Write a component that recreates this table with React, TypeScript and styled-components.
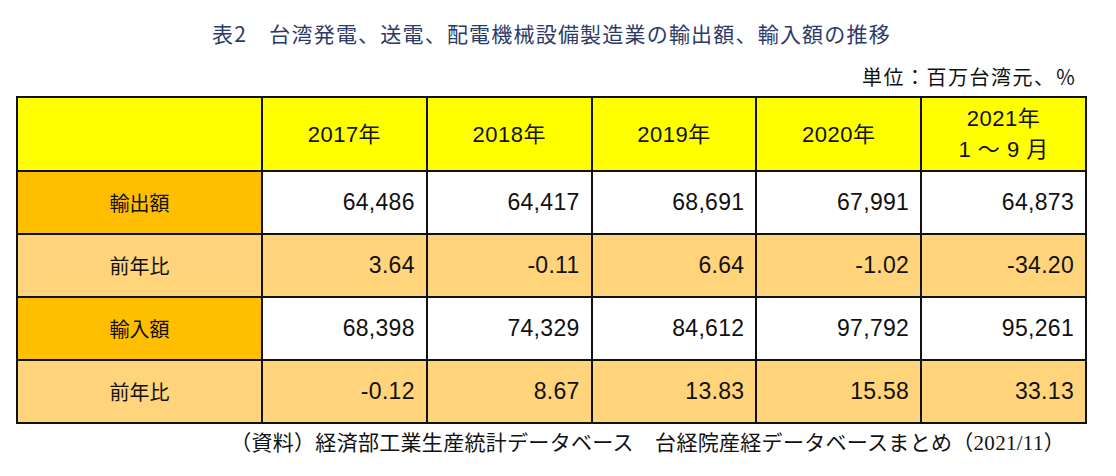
import React from 'react';
import styled, { createGlobalStyle } from 'styled-components';

const GlobalStyle = createGlobalStyle`
  html, body {
    margin: 0;
    padding: 0;
    background: #ffffff;
  }
`;

const Page = styled.div`
  width: 1116px;
  height: 476px;
  box-sizing: border-box;
  padding: 20px 29px 0 16px;
  font-family: "Noto Sans CJK JP", "Noto Sans", sans-serif;
  color: #111;
`;

const Title = styled.h1`
  margin: 0;
  text-align: center;
  font-size: 21px;
  line-height: 26px;
  font-weight: 400;
  letter-spacing: 1.2px;
  color: #2b3a67;
`;

const Unit = styled.div`
  margin-top: 18px;
  text-align: right;
  font-size: 20px;
  line-height: 26px;
  letter-spacing: 1.5px;
  padding-right: 10px;
`;

const Table = styled.table`
  margin-top: 6px;
  width: 1071px;
  border-collapse: collapse;
  table-layout: fixed;
  border: 2px solid #111;
`;

const HeadCell = styled.th`
  height: 72px;
  background: #ffff00;
  border: 2px solid #111;
  font-family: "Liberation Sans", "Noto Sans CJK JP", sans-serif;
  font-size: 22px;
  line-height: 31px;
  font-weight: 400;
  letter-spacing: 0.5px;
  text-align: center;
  padding: 0;
`;

type Tone = 'white' | 'light';

const LabelCell = styled.th<{ $strong: boolean }>`
  height: 61px;
  background: ${p => (p.$strong ? '#ffbf00' : '#ffd47b')};
  border: 2px solid #111;
  font-size: 20px;
  font-weight: 400;
  text-align: center;
  padding: 0;
`;

const ValueCell = styled.td<{ $tone: Tone }>`
  background: ${p => (p.$tone === 'white' ? '#ffffff' : '#ffd47b')};
  border: 2px solid #111;
  font-family: "Liberation Sans", "Noto Sans", sans-serif;
  font-size: 23px;
  letter-spacing: 0.3px;
  text-align: right;
  padding: 0 11px 0 0;
`;

const Source = styled.div`
  margin-top: 6px;
  text-align: right;
  padding-right: 22px;
  font-family: "Liberation Serif", "Noto Sans CJK JP", serif;
  font-size: 21px;
  line-height: 26px;
  letter-spacing: 0.3px;
`;

const years = ['2017年', '2018年', '2019年', '2020年'];

const rows: { label: string; strong: boolean; values: string[] }[] = [
  { label: '輸出額', strong: true, values: ['64,486', '64,417', '68,691', '67,991', '64,873'] },
  { label: '前年比', strong: false, values: ['3.64', '-0.11', '6.64', '-1.02', '-34.20'] },
  { label: '輸入額', strong: true, values: ['68,398', '74,329', '84,612', '97,792', '95,261'] },
  { label: '前年比', strong: false, values: ['-0.12', '8.67', '13.83', '15.58', '33.13'] },
];

export default function App() {
  return (
    <>
      <GlobalStyle />
      <Page>
        <Title>表2　台湾発電、送電、配電機械設備製造業の輸出額、輸入額の推移</Title>
        <Unit>単位：百万台湾元、％</Unit>
        <Table>
          <colgroup>
            <col style={{ width: 245 }} />
            <col />
            <col />
            <col />
            <col />
            <col />
          </colgroup>
          <thead>
            <tr>
              <HeadCell />
              {years.map(y => (
                <HeadCell key={y}>{y}</HeadCell>
              ))}
              <HeadCell>
                2021年
                <br />1 ～ 9 月
              </HeadCell>
            </tr>
          </thead>
          <tbody>
            {rows.map((r, i) => (
              <tr key={i}>
                <LabelCell $strong={r.strong}>{r.label}</LabelCell>
                {r.values.map((v, j) => (
                  <ValueCell key={j} $tone={r.strong ? 'white' : 'light'}>
                    {v}
                  </ValueCell>
                ))}
              </tr>
            ))}
          </tbody>
        </Table>
        <Source>（資料）経済部工業生産統計データベース　台経院産経データベースまとめ（2021/11）</Source>
      </Page>
    </>
  );
}
